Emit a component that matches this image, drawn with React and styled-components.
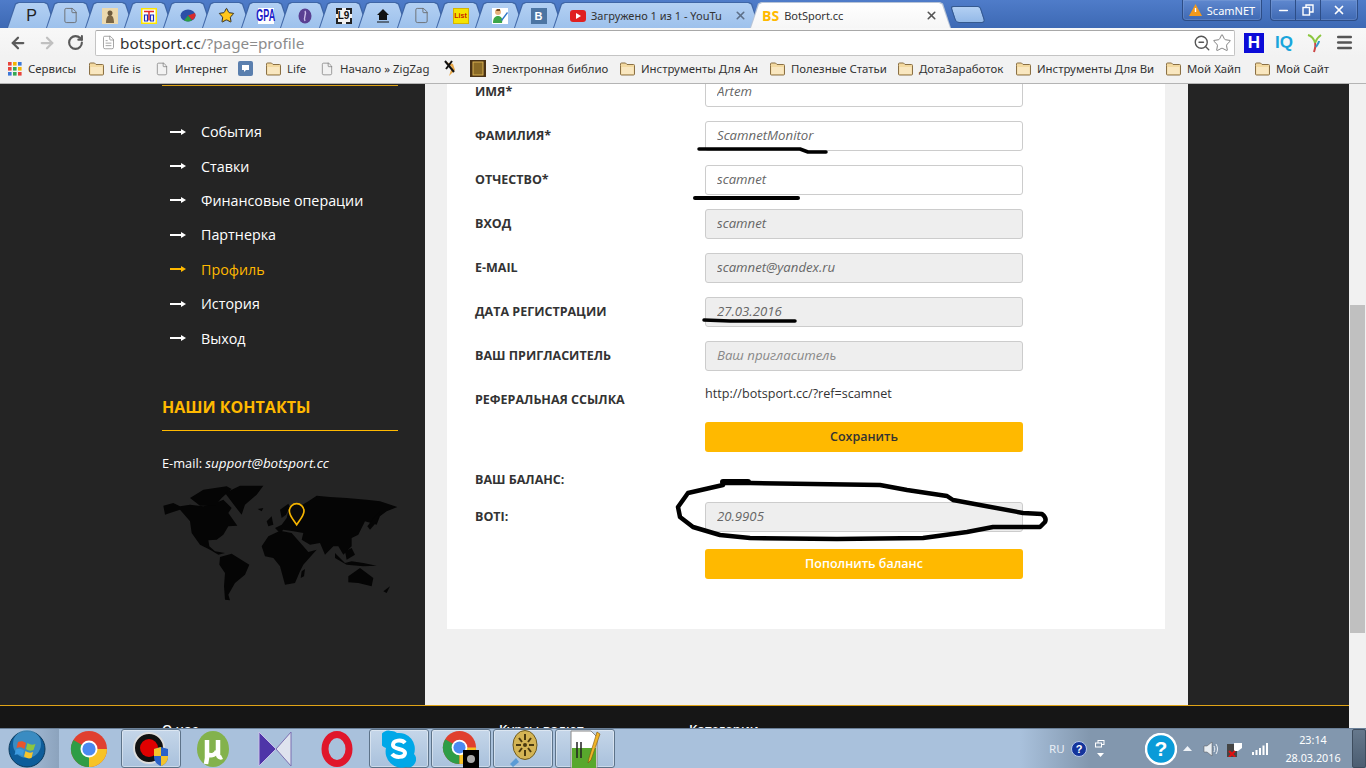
import React from 'react';
import styled, { createGlobalStyle, css } from 'styled-components';
import { ArrowLeft, ArrowRight, RotateCw, ZoomOut, Star, Menu, FileText, File, Minus, X } from 'lucide-react';

const Global = createGlobalStyle`
	html, body { margin: 0; padding: 0; background: #fff; }
	body { font-family: "Open Sans", sans-serif; overflow: hidden; }
	* { box-sizing: border-box; }
`;

const Screen = styled.div`
	position: relative;
	width: 1366px;
	height: 768px;
	overflow: hidden;
	display: flex;
	flex-direction: column;
`;

/* ---- browser chrome ---- */
const TabStrip = styled.div`
	height: 28px;
	flex: none;
	display: flex;
	align-items: flex-end;
	padding-left: 7px;
	background: linear-gradient(180deg, #4f7cc9, #3d69b4);
	position: relative;
`;
const tabShape = 'polygon(0 100%, 8px 6%, 11px 0, calc(100% - 11px) 0, calc(100% - 8px) 6%, 100% 100%)';
const Tab = styled.div`
	width: ${({ $w }) => $w}px;
	height: 26px;
	margin-right: -10px;
	flex: none;
	clip-path: ${tabShape};
	background: ${({ $active }) => ($active ? '#b8c4d6' : '#3f66a6')};
	padding: 1px 1px 0;
	position: relative;
	z-index: ${({ $active }) => ($active ? 2 : 1)};
`;
const TabFace = styled.div`
	height: 100%;
	clip-path: ${tabShape};
	background: ${({ $active }) => ($active ? 'linear-gradient(180deg,#fff,#f6f6f6)' : 'linear-gradient(180deg,#b3d0f3,#9dc1ec)')};
	display: flex;
	align-items: center;
	justify-content: ${({ $wide }) => ($wide ? 'flex-start' : 'center')};
	padding: ${({ $wide }) => ($wide ? '0 12px 0 16px' : '0')};
	gap: 5px;
	font-size: 11px;
	color: #333;
	white-space: nowrap;
	overflow: hidden;
`;
const TabTitle = styled.span`
	flex: 1;
	font-family: "Noto Sans", sans-serif;
`;
const BrandMark = styled.b`
	color: #ffb900;
	font-size: 14px;
	flex: none;
	margin-left: -5px;
`;
const SmallFav = styled.span`
	width: 16px;
	height: 16px;
	display: flex;
	align-items: center;
	justify-content: center;
	font-family: "Liberation Sans", sans-serif;
	background: ${({ $bg }) => $bg || 'transparent'};
	color: ${({ $fg }) => $fg || '#222'};
	font-size: ${({ $size }) => $size || 12}px;
	font-weight: ${({ $weight }) => $weight || 700};
	border: ${({ $edge }) => $edge || '0'};
	letter-spacing: ${({ $track }) => $track || 0}px;
`;
const NarrowLetters = styled.span`
	display: block;
	transform: scaleX(0.56);
`;
const NewTab = styled.div`
	width: 30px;
	height: 17px;
	margin: 0 0 5px 12px;
	background: linear-gradient(180deg, #b3d0f3, #94b9e8);
	border: 1px solid #35598f;
	border-radius: 3px 3px 4px 4px;
	transform: skewX(18deg);
`;
const CloseMark = styled(X)`
	flex: none;
	color: ${({ $active }) => ($active ? '#555' : '#5d6f88')};
`;
const WindowGroup = styled.div`
	position: absolute;
	top: 0;
	right: 0;
	display: flex;
	gap: 8px;
`;
const AlertButton = styled.div`
	width: 80px;
	height: 21px;
	display: flex;
	align-items: center;
	justify-content: center;
	gap: 5px;
	color: #fff;
	font-size: 11px;
	background: linear-gradient(180deg, #5f88cf, #3f69b3);
	border: 1px solid #2d4d86;
	border-top: 0;
	border-radius: 0 0 4px 4px;
	box-shadow: inset 0 0 0 1px #8aa8dc55;
	font-family: "Noto Sans", sans-serif;
`;
const WindowButtons = styled.div`
	width: 88px;
	height: 21px;
	display: flex;
	background: linear-gradient(180deg, #5f88cf, #3f69b3);
	border: 1px solid #2d4d86;
	border-top: 0;
	border-radius: 0 0 4px 4px;
	margin-right: 8px;
	box-shadow: inset 0 0 0 1px #8aa8dc55;
`;
const WinBtn = styled.div`
	flex: ${({ $grow }) => $grow || 1};
	display: flex;
	align-items: center;
	justify-content: center;
	color: #fff;
	border-left: ${({ $first }) => ($first ? '0' : '1px solid #2d4d86')};
`;

const Toolbar = styled.div`
	height: 29px;
	flex: none;
	display: flex;
	align-items: center;
	padding: 0 0 0 3px;
	background: linear-gradient(180deg, #f8f8f8, #f2f2f2);
`;
const NavIcon = styled.div`
	width: 29px;
	display: flex;
	justify-content: center;
	color: ${({ $off }) => ($off ? '#c0c0c0' : '#5a5a5a')};
`;
const Omnibox = styled.div`
	width: 1140px;
	height: 26px;
	margin-left: 5px;
	display: flex;
	align-items: center;
	background: #fff;
	border: 1px solid #c4c4c4;
	border-top-color: #a8a8a8;
	border-radius: 2px;
	padding: 0 2px 0 5px;
	font-family: "Noto Sans", sans-serif;
	font-size: 15.3px;
	color: #333;
`;
const UrlText = styled.span`
	margin-left: 4px;
	flex: 1;
	span { color: #8c8c8c; }
`;
const ExtIcons = styled.div`
	display: flex;
	align-items: center;
	margin-left: 9px;
	gap: 11px;
`;
const HBadge = styled.div`
	width: 20px;
	height: 20px;
	background: #0c0cd8;
	color: #fff;
	font: bold 17px "Liberation Sans", sans-serif;
	text-align: center;
	line-height: 20px;
`;
const IqBadge = styled.div`
	color: #1aa5dc;
	font: bold 17px "Liberation Sans", sans-serif;
	width: 20px;
`;

const Bookmarks = styled.div`
	height: 27px;
	flex: none;
	display: flex;
	align-items: center;
	padding: 0 0 3px 8px;
	background: #f2f2f2;
	border-bottom: 1px solid #b4b4b4;
	font-family: "Noto Sans", sans-serif;
	font-size: 11.4px;
	color: #333;
`;
const Mark = styled.div`
	display: flex;
	align-items: center;
	gap: 6px;
	width: ${({ $w }) => $w}px;
	flex: none;
	white-space: nowrap;
	span { flex: 1; }
	svg { flex: none; }
`;

/* ---- page ---- */
const Viewport = styled.div`
	position: relative;
	flex: 1;
	min-height: 0;
	display: flex;
`;
const Page = styled.div`
	flex: 1;
	min-width: 0;
	overflow: hidden;
	background: #242424;
`;
const Columns = styled.div`
	display: flex;
	height: 621px;
`;
const Sidebar = styled.aside`
	width: 425px;
	flex: none;
	padding: 1px 27px 0 162px;
	color: #fff;
`;
const TopRule = styled.div`
	height: 1px;
	background: #e0a417;
`;
const NavList = styled.ul`
	list-style: none;
	margin: 28.5px 0 0;
	padding: 0 0 0 8px;
`;
const NavItem = styled.li`
	height: 34.4px;
	display: flex;
	align-items: center;
	gap: 15px;
	font-size: 14.3px;
	color: ${({ $active }) => ($active ? '#ffb900' : '#fff')};
	svg { flex: none; }
`;
const ContactsTitle = styled.h3`
	margin: 41px 0 0;
	height: 35px;
	border-bottom: 1px solid #ffb900;
	color: #ffb900;
	font-size: 16px;
	font-weight: 700;
	line-height: 22px;
`;
const EmailLine = styled.div`
	margin-top: 22px;
	font-size: 12.8px;
	line-height: 20px;
	i { font-style: italic; font-size: 13.4px; }
`;
const MapBox = styled.svg`
	display: block;
	margin: 10px 0 0 -2px;
`;
const Main = styled.main`
	width: 763px;
	flex: none;
	background: #f0f0f0;
	padding: 0 23px 0 22px;
`;
const Card = styled.div`
	background: #fff;
	height: 552px;
	margin-top: -7px;
	padding-left: 28px;
`;
const Row = styled.div`
	display: grid;
	grid-template-columns: 230px 318px;
	align-items: center;
	height: 30px;
	margin-top: ${({ $top }) => $top ?? 14}px;
`;
const Label = styled.label`
	font-size: 12.5px;
	font-weight: 700;
	color: #333;
	text-transform: uppercase;
	white-space: nowrap;
	position: relative;
	top: -1px;
`;
const Input = styled.input`
	width: 318px;
	height: 30px;
	padding: 0 11px 2px;
	border: 1px solid #ccc;
	border-radius: 3px;
	background: ${({ disabled }) => (disabled ? '#eee' : '#fff')};
	color: #666;
	font: italic 13.2px "Open Sans", sans-serif;
	-webkit-text-fill-color: #666;
	opacity: 1;
	outline: none;
	&::placeholder { color: #888; -webkit-text-fill-color: #888; opacity: 1; }
`;
const RefLink = styled.div`
	font-size: 12.6px;
	color: #333;
	position: relative;
	top: -7px;
`;
const Action = styled.button`
	grid-column: 2;
	width: 318px;
	height: 30px;
	padding: 0 0 2px;
	border: 0;
	border-radius: 3px;
	background: #ffb900;
	font: 600 12.5px "Open Sans", sans-serif;
	color: ${({ $light }) => ($light ? '#fff' : '#333')};
`;
const RightGutter = styled.div`
	flex: 1;
`;
const Footer = styled.footer`
	height: 30px;
	background: #161616;
	border-top: 1px solid #e0a417;
	display: flex;
	padding: 14px 0 0 162px;
	color: #fff;
	font-size: 13px;
	font-weight: 600;
	line-height: 18px;
`;
const FooterCol = styled.div`
	width: ${({ $w }) => $w}px;
	flex: none;
`;
const Scrollbar = styled.div`
	width: 17px;
	flex: none;
	background: #f1f1f1;
	display: flex;
	flex-direction: column;
	align-items: center;
	padding-top: 221px;
	padding-bottom: 5px;
`;
const Thumb = styled.div`
	width: 15px;
	height: 328px;
	background: #c0c0c0;
`;
const DownArrow = styled.div`
	margin-top: auto;
	width: 0;
	height: 0;
	border: 4px solid transparent;
	border-top: 5px solid #505050;
	border-bottom: 0;
`;
const Ink = styled.svg`
	position: absolute;
	left: 0;
	top: -84px;
	pointer-events: none;
`;

/* ---- taskbar ---- */
const Taskbar = styled.div`
	position: absolute;
	left: 0;
	right: 0;
	bottom: 0;
	height: 40px;
	display: flex;
	align-items: center;
	background: linear-gradient(90deg, #a9c1dc 0, #a9c1dc 1020px, #8297ae 1090px, #8297ae 100%);
	border-top: 1px solid #6b8098;
`;
const StartSlot = styled.div`
	width: 59px;
	flex: none;
	padding-left: 8px;
	display: flex;
	align-items: center;
	height: 100%;
	background: linear-gradient(90deg, #a9c1dc 30%, #8ca3bd 100%);
`;
const TaskItems = styled.div`
	display: flex;
	gap: 2px;
	height: 100%;
`;
const TaskItem = styled.div`
	width: 60px;
	height: 39px;
	display: flex;
	align-items: center;
	justify-content: center;
	${({ $open }) => $open && css`
		border: 1px solid #5d7389;
		border-radius: 3px;
		background: linear-gradient(180deg, #c5d6e9, #a9c1dc);
		box-shadow: inset 0 0 0 1px #ffffff66;
	`}
`;
const Tray = styled.div`
	margin-left: auto;
	display: flex;
	align-items: center;
	height: 100%;
	color: #fff;
`;
const TrayLang = styled.span`
	width: 18px;
	font: 11.5px "Noto Sans", sans-serif;
	color: #e8eef5;
`;
const Clock = styled.div`
	width: 78px;
	text-align: center;
	font: 10.8px/18px "Noto Sans", sans-serif;
	color: #fff;
`;
const ShowDesktop = styled.div`
	width: 14px;
	height: 39px;
	background: linear-gradient(180deg, #66788c, #4c5e72);
	border: 1px solid #3e4d5e;
	border-radius: 2px;
`;
const TraySlot = styled.div`
	width: ${({ $w }) => $w}px;
	flex: none;
	display: flex;
	justify-content: center;
	align-items: center;
	padding-left: ${({ $pad }) => $pad || 0}px;
	flex-direction: ${({ $col }) => ($col ? 'column' : 'row')};
	gap: ${({ $col }) => ($col ? '5px' : '0')};
	svg { flex: none; }
`;

/* ---- small drawings ---- */
const Folder = () => (
	<svg width="15" height="14" viewBox="0 0 15 14">
		<path d="M.5 3.5v8.5a1 1 0 0 0 1 1h12a1 1 0 0 0 1-1V3.5a1 1 0 0 0-1-1H7L5.5 1H1.5a1 1 0 0 0-1 1z" fill="#f3d9a0" stroke="#8a7045" />
		<path d="M1.5 5h12v7h-12z" fill="#f9e7c0" />
	</svg>
);
const Doc = ({ size = 14, color = '#777' }) => <File size={size} color={color} strokeWidth={1.2} />;
const AppsGrid = () => (
	<svg width="14" height="14" viewBox="0 0 14 14">
		{['#e8453c', '#f4b400', '#3c78d8', '#e8453c', '#34a853', '#f4b400', '#3c78d8', '#34a853', '#e8453c'].map((c, i) => (
			<rect key={i} x={(i % 3) * 5} y={Math.floor(i / 3) * 5} width="3.6" height="3.6" fill={c} />
		))}
	</svg>
);
const NavArrow = ({ color }) => (
	<svg width="16" height="8" viewBox="0 0 16 8">
		<path d="M0 4h13" stroke={color} strokeWidth="2" />
		<path d="M11 1l5 3-5 3z" fill={color} />
	</svg>
);
const Chrome = ({ size = 38 }) => (
	<svg width={size} height={size} viewBox="0 0 38 38">
		<circle cx="19" cy="19" r="18" fill="#e0402f" />
		<path d="M19 19L3.4 10A18 18 0 0 0 19 37z" fill="#2e9d46" />
		<path d="M19 19h18A18 18 0 0 1 19 37z" fill="#f6c327" />
		<circle cx="19" cy="19" r="8.5" fill="#fff" />
		<circle cx="19" cy="19" r="6.6" fill="#4a8af0" />
	</svg>
);

const favicons = [
	<SmallFav key="p" $size={16} $weight={400}>P</SmallFav>,
	<Doc key="d1" size={17} color="#666" />,
	<svg key="a" width="16" height="16"><rect width="16" height="16" fill="#ecd9ae" /><circle cx="8" cy="5" r="2.500" fill="#6d5a3c" /><path d="M4 15c0-6 2-8 4-8s4 2 4 8z" fill="#7b6644" /></svg>,
	<svg key="b" width="16" height="16"><rect width="16" height="16" fill="#ffe400" /><rect x="1.500" y="1.500" width="13" height="13" fill="#fff" /><path d="M3 3.500h10M8 3.500v9" stroke="#e62a2a" strokeWidth="1.600" /><path d="M3.500 7h3v6h-3zM9.500 7h3v6h-3z" fill="none" stroke="#1d2fc0" strokeWidth="1.200" /></svg>,
	<svg key="c" width="16" height="13"><ellipse cx="8" cy="6.500" rx="7.500" ry="6" fill="#2c4ea8" /><path d="M8 6.500L15 4a7.500 6 0 0 1-3 7z" fill="#d92c2c" /><path d="M8 6.500l4 5a7.500 6 0 0 1-8 0z" fill="#2c9d46" /></svg>,
	<Star key="s" size={17} fill="#ffc61a" color="#222" strokeWidth={1.3} />,
	<SmallFav key="g" $bg="#fff" $fg="#1a1ac8" $size={16}><NarrowLetters>GPA</NarrowLetters></SmallFav>,
	<svg key="o" width="14" height="16"><ellipse cx="7" cy="8" rx="6.500" ry="7.500" fill="#5a3f92" /><path d="M7 3c2 3-2 6 0 10" stroke="#cdbde8" strokeWidth="1.400" fill="none" /></svg>,
	<SmallFav key="l" $bg="#f2f2f2" $fg="#111" $size={10} $edge="2px dashed #222">L9</SmallFav>,
	<svg key="h" width="14" height="15"><path d="M7 1l6 6h-2v5H3V7H1z" fill="#111" /><path d="M1 14h12" stroke="#111" /></svg>,
	<Doc key="d2" size={17} color="#666" />,
	<SmallFav key="li" $bg="#f5e400" $fg="#c81e00" $size={7} $edge="1px solid #d6b400">List</SmallFav>,
	<svg key="u" width="16" height="16"><rect width="16" height="16" fill="#fff" /><circle cx="6" cy="4" r="3" fill="#e6b27e" /><path d="M5 1h3v2H4z" fill="#7a4a1c" /><path d="M1 15c0-5 2-7 5-7s5 2 4 7z" fill="#3ca648" /><path d="M9 12L15 4l1 1-6 8z" fill="#2a72c8" /></svg>,
	<SmallFav key="v" $bg="#4c75a3" $fg="#fff" $size={11}>В</SmallFav>,
];

const navItems = ['События', 'Ставки', 'Финансовые операции', 'Партнерка', 'Профиль', 'История', 'Выход'];

const bookmarks = [
	[81, <AppsGrid />, 'Сервисы'],
	[66, <Folder />, 'Life is'],
	[83, <Doc />, 'Интернет'],
	[28, <svg width="15" height="15"><rect width="15" height="15" rx="2" fill="#5a7fae" /><path d="M4 4h7v5H8l-2 2V9H4z" fill="#fff" /></svg>, ''],
	[54, <Folder />, 'Life'],
	[123, <Doc />, 'Начало » ZigZag'],
	[27, <svg width="14" height="17"><path d="M2 2l7 5-3 9 6-6-2-6z" fill="#e8a848" /><path d="M2 1l9 11M3 9l6-8" stroke="#111" strokeWidth="2" /></svg>, ''],
	[150, <svg width="16" height="17"><rect width="16" height="17" fill="#4a3316" /><rect x="3" y="2" width="10" height="13" fill="#8a6a26" stroke="#d8b050" /></svg>, 'Электронная библио'],
	[150, <Folder />, 'Инструменты Для Ан'],
	[128, <Folder />, 'Полезные Статьи'],
	[118, <Folder />, 'ДотаЗаработок'],
	[150, <Folder />, 'Инструменты Для Ви'],
	[89, <Folder />, 'Мой Хайп'],
	[80, <Folder />, 'Мой Сайт'],
];

const fields = [
	['Имя*', 'Artem', false],
	['Фамилия*', 'ScamnetMonitor', false],
	['Отчество*', 'scamnet', false],
	['Вход', 'scamnet', true],
	['E-mail', 'scamnet@yandex.ru', true],
	['Дата регистрации', '27.03.2016', true],
];

const WorldMap = () => (
	<MapBox width="240" height="122" viewBox="0 0 720 366">
		<g fill="#050505">
			<path d="M10 68L40 60L60 70L90 65L130 70L160 62L190 50L215 75L205 90L232 128L205 130L190 155L170 170L145 172L148 190L165 205L195 210L175 215L150 200L120 185L95 150L90 115L60 80L30 90L15 95Z" />
			<path d="M90 45L130 20L200 10L215 18L185 45L165 68L120 68Z" />
			<path d="M195 30L240 8L310 8L290 35L255 65L245 95L225 70Z" />
			<path d="M180 222L215 212L268 245L255 275L225 300L205 335L210 352L195 350L192 310L195 270L178 245Z" />
			<path d="M305 190L325 160L360 143L395 150L430 190L445 207L470 200L430 245L420 265L405 300L375 305L360 250L340 225L315 220Z" />
			<path d="M420 70L445 55L470 38L510 42L560 45L620 50L660 55L712 72L680 85L660 100L650 125L615 115L595 155L575 165L575 190L550 215L535 190L520 190L495 215L480 180L450 185L425 170L430 150L400 145L370 140L360 150L345 135L365 125L380 105L385 85Z" />
			<path d="M360 80L385 62L390 72L378 95L365 105Z" />
			<path d="M320 115L335 100L340 125L325 130Z" />
			<path d="M293 78L310 75L305 85Z" />
			<path d="M565 280L600 255L640 285L635 310L595 300L565 298Z" />
			<path d="M525 210L555 240L575 235L610 240L650 248L610 250L560 245L525 225Z" />
			<path d="M555 205L575 195L585 215L560 230Z" />
			<path d="M645 100L660 85L652 115L630 140L622 130Z" />
			<path d="M425 265L435 258L432 280L422 285Z" />
			<path d="M670 325L690 310L680 330Z" />
		</g>
		<path d="M410 125C400 110 388 98 388 84a22 22 0 0 1 44 0C432 98 420 110 410 125z" fill="#0a0a0a" stroke="#f5b400" strokeWidth="5" />
	</MapBox>
);

const App = () => (
	<Screen>
		<Global />
		<TabStrip>
			{favicons.map((icon, i) => (
				<Tab key={i} $w={49}>
					<TabFace>{icon}</TabFace>
				</Tab>
			))}
			<Tab $w={207}>
				<TabFace $wide>
					<svg width="16" height="12" style={{ flex: 'none' }}><rect width="16" height="12" rx="3" fill="#e02020" /><path d="M6 3l5 3-5 3z" fill="#fff" /></svg>
					<TabTitle>Загружено 1 из 1 - YouTu</TabTitle>
					<CloseMark size={13} strokeWidth={3} />
				</TabFace>
			</Tab>
			<Tab $w={201} $active>
				<TabFace $active $wide>
					<BrandMark>BS</BrandMark>
					<TabTitle>BotSport.cc</TabTitle>
					<CloseMark $active size={13} strokeWidth={3} />
				</TabFace>
			</Tab>
			<NewTab />
			<WindowGroup>
				<AlertButton>
					<svg width="13" height="12"><path d="M6.5 0L13 12H0z" fill="#f39a1c" /><path d="M6.5 4v4" stroke="#fff" strokeWidth="1.4" /></svg>
					ScamNET
				</AlertButton>
				<WindowButtons>
					<WinBtn $first><Minus size={13} strokeWidth={3} /></WinBtn>
					<WinBtn>
						<svg width="12" height="12" fill="none" stroke="#fff" strokeWidth="1.4"><rect x="1" y="3.5" width="6.5" height="7.5" /><path d="M4 3V1h7v7H8" /></svg>
					</WinBtn>
					<WinBtn $grow={1.5}><X size={14} strokeWidth={3} /></WinBtn>
				</WindowButtons>
			</WindowGroup>
		</TabStrip>
		<Toolbar>
			<NavIcon><ArrowLeft size={18} strokeWidth={3} /></NavIcon>
			<NavIcon $off><ArrowRight size={18} strokeWidth={3} /></NavIcon>
			<NavIcon><RotateCw size={17} strokeWidth={3} /></NavIcon>
			<Omnibox>
				<FileText size={15} color="#888" strokeWidth={1.2} />
				<UrlText>botsport.cc<span>/?page=profile</span></UrlText>
				<ZoomOut size={18} color="#555" strokeWidth={1.8} />
				<Star size={20} color="#777" strokeWidth={1.1} style={{ marginLeft: 1 }} />
			</Omnibox>
			<ExtIcons>
				<HBadge>H</HBadge>
				<IqBadge>IQ</IqBadge>
				<svg width="18" height="20"><path d="M2 2c4 1 6 4 7 8M15 2c-3 2-5 5-6 8" stroke="#8cc63f" strokeWidth="2" fill="none" /><path d="M9 10c1 3 0 6-1 9" stroke="#c44" strokeWidth="2" fill="none" /><path d="M13 8c0 2-2 4-3 6" stroke="#39c" strokeWidth="2" fill="none" /></svg>
				<Menu size={19} strokeWidth={3} color="#555" />
			</ExtIcons>
		</Toolbar>
		<Bookmarks>
			{bookmarks.map(([w, icon, text], i) => (
				<Mark key={i} $w={w}>
					{icon}
					{text && <span>{text}</span>}
				</Mark>
			))}
		</Bookmarks>
		<Viewport>
			<Page>
				<Columns>
					<Sidebar>
						<TopRule />
						<NavList>
							{navItems.map(item => (
								<NavItem key={item} $active={item === 'Профиль'}>
									<NavArrow color={item === 'Профиль' ? '#ffb900' : '#fff'} />
									{item}
								</NavItem>
							))}
						</NavList>
						<ContactsTitle>НАШИ КОНТАКТЫ</ContactsTitle>
						<EmailLine>E-mail: <i>support@botsport.cc</i></EmailLine>
						<WorldMap />
					</Sidebar>
					<Main>
						<Card>
							{fields.map(([label, value, disabled], i) => (
								<Row key={label} $top={i === 0 ? 0 : 14}>
									<Label>{label}</Label>
									<Input readOnly value={value} disabled={disabled} />
								</Row>
							))}
							<Row>
								<Label>Ваш пригласитель</Label>
								<Input disabled placeholder="Ваш пригласитель" />
							</Row>
							<Row>
								<Label>Реферальная ссылка</Label>
								<RefLink>http://botsport.cc/?ref=scamnet</RefLink>
							</Row>
							<Row $top={7}>
								<Action>Сохранить</Action>
							</Row>
							<Row $top={13}>
								<Label>Ваш баланс:</Label>
							</Row>
							<Row $top={7}>
								<Label>BOTI:</Label>
								<Input disabled value="20.9905" readOnly />
							</Row>
							<Row $top={17}>
								<Action $light>Пополнить баланс</Action>
							</Row>
						</Card>
					</Main>
					<RightGutter />
				</Columns>
				<Footer>
					<FooterCol $w={337}>О нас</FooterCol>
					<FooterCol $w={190}>Курсы валют</FooterCol>
					<FooterCol $w={100}>Категории</FooterCol>
				</Footer>
			</Page>
			<Scrollbar>
				<Thumb />
				<DownArrow />
			</Scrollbar>
			<Ink width="1366" height="768" fill="none" stroke="#000" strokeLinecap="round" strokeLinejoin="round">
				<path d="M699 149H800L808 152H826" strokeWidth="3.5" />
				<path d="M695 198H798" strokeWidth="4" />
				<path d="M704 320L730 321H795" strokeWidth="3.5" />
				<path d="M723 483H750L880 485L907 490L947 496L953 500L1023 513L1042 514Q1047 518 1045 522L1040 527L993 527L967 532L923 538L837 539L750 538L720 535L693 527L680 517L678 507L688 493L723 485" strokeWidth="4.5" />
				<path d="M723 482H748" strokeWidth="6" />
			</Ink>
		</Viewport>
		<Taskbar>
			<StartSlot>
				<svg width="38" height="38" viewBox="0 0 38 38">
					<circle cx="19" cy="19" r="18" fill="#0e5d9a" stroke="#0c3a5c" />
					<circle cx="19" cy="14" r="14" fill="#5fb2e4" opacity=".55" />
					<path d="M10 12c3-1 5-1 8 1l-1.500 6c-3-2-5-2-8-1z" fill="#e8552c" />
					<path d="M19.500 13c3 2 5 2 8 1l-2 6c-3 1-5 1-7.500-1z" fill="#8cc63f" />
					<path d="M8 19.500c3-1 5-1 8 1L14.500 26c-3-2-5-2-8-1z" fill="#3d9be0" />
					<path d="M17.500 21c3 2 5 2 7.500 1l-1.500 6c-3 1-5 0-7.500-1.500z" fill="#f7c52c" />
				</svg>
			</StartSlot>
			<TaskItems>
				<TaskItem><Chrome /></TaskItem>
				<TaskItem $open>
					<svg width="38" height="38" viewBox="0 0 38 38">
						<circle cx="17" cy="18" r="15" fill="#111" stroke="#ddd" strokeWidth="2" />
						<circle cx="17" cy="18" r="9" fill="#e00000" />
						<path d="M22 19l7-2 7 2v8c0 5-4 8-7 9-3-1-7-4-7-9z" fill="#2a62c8" />
						<path d="M29 17v19c3-1 7-4 7-9v-1H22v-7z" fill="#f3c32c" />
					</svg>
				</TaskItem>
				<TaskItem>
					<svg width="34" height="38" viewBox="0 0 34 38">
						<ellipse cx="17" cy="19" rx="16" ry="18" fill="#83b24c" />
						<path d="M11 10v18l-1 6M11 24c5 3 9 0 10-3M22 10v14c0 3 2 4 4 3" stroke="#fff" strokeWidth="4.500" fill="none" />
					</svg>
				</TaskItem>
				<TaskItem>
					<svg width="34" height="36" viewBox="0 0 34 36">
						<path d="M1 1L18 18 1 35z" fill="#4e35a8" stroke="#c8c0e8" />
						<path d="M33 1L18 18l15 17z" fill="#dfe3ee" stroke="#7b6fb0" />
					</svg>
				</TaskItem>
				<TaskItem>
					<svg width="32" height="38" viewBox="0 0 32 38">
						<ellipse cx="16" cy="19" rx="12" ry="14.500" fill="none" stroke="#e0162b" strokeWidth="7" />
					</svg>
				</TaskItem>
				<TaskItem $open>
					<svg width="34" height="38" viewBox="0 0 34 38">
						<path d="M9 1a8 8 0 0 1 6 2a16 16 0 0 1 17 21a8 8 0 0 1-8 13a16 16 0 0 1-20-19a8 8 0 0 1 5-17z" fill="#00a8e8" />
						<path d="M23 13c-3-4-12-3-12 2 0 5 12 3 12 8 0 5-10 5-13 1" stroke="#fff" strokeWidth="4" fill="none" />
					</svg>
				</TaskItem>
				<TaskItem $open>
					<svg width="38" height="38" viewBox="0 0 38 38">
						<g transform="scale(.92)"><Chrome /></g>
						<rect x="21" y="20" width="16" height="18" fill="#000" />
						<circle cx="29" cy="29" r="4" fill="#aaa" />
					</svg>
				</TaskItem>
				<TaskItem $open>
					<svg width="30" height="38" viewBox="0 0 30 38">
						<ellipse cx="17" cy="15" rx="12" ry="14.500" fill="#d4b454" stroke="#6e5a1e" />
						<circle cx="17" cy="15" r="2" fill="#4a3a10" />
						<path d="M17 4v6M17 20v6M8 15h5M21 15h5M11 8l3 4M23 22l-3-4M23 8l-3 4M11 22l3-4" stroke="#4a3a10" strokeWidth="2" />
						<path d="M8 28l-6 6 3 3 6-5z" fill="#5b9bd5" />
					</svg>
				</TaskItem>
				<TaskItem $open>
					<svg width="32" height="38" viewBox="0 0 32 38">
						<path d="M2 1h20l6 6v31H2z" fill="#fff" stroke="#888" />
						<path d="M3 18h24v20H3z" fill="#58a82c" />
						<path d="M8 12v16M12 12v16" stroke="#222" strokeWidth="1.500" />
						<path d="M28 2L20 28l-1 5 3-3L31 4z" fill="#f0b428" stroke="#7a5410" strokeWidth=".6" />
					</svg>
				</TaskItem>
			</TaskItems>
			<Tray>
				<TrayLang>RU</TrayLang>
				<TraySlot $w={24}>
					<svg width="16" height="16"><circle cx="8" cy="8" r="7.500" fill="#14349c" stroke="#b8c8e8" /><text x="8" y="12" fontSize="11" fontWeight="700" fill="#fff" textAnchor="middle" fontFamily="Liberation Sans">?</text></svg>
				</TraySlot>
				<TraySlot $w={18} $col>
					<svg width="10" height="8" fill="none" stroke="#fff"><rect x="3" y=".5" width="6" height="4" /><rect x=".5" y="3" width="6" height="4" fill="#8297ae" /></svg>
					<svg width="7" height="4"><path d="M0 0h7L3.500 4z" fill="#fff" /></svg>
				</TraySlot>
				<TraySlot $w={32} />
				<TraySlot $w={40}>
					<svg width="32" height="32"><circle cx="16" cy="16" r="15" fill="#0a9bd8" stroke="#fff" strokeWidth="2.500" /><text x="16" y="23" fontSize="21" fontWeight="700" fill="#fff" textAnchor="middle" fontFamily="Liberation Sans">?</text></svg>
				</TraySlot>
				<TraySlot $w={12}>
					<svg width="9" height="5"><path d="M0 5L4.500 0 9 5z" fill="#eef2f7" /></svg>
				</TraySlot>
				<TraySlot $w={35}>
					<svg width="16" height="16"><path d="M1 5h3l5-4v14l-5-4H1z" fill="#e8edf2" stroke="#555" strokeWidth=".5" /><path d="M11 5c1 2 1 4 0 6M13 3c2 3 2 7 0 10" stroke="#eef2f7" fill="none" /></svg>
				</TraySlot>
				<TraySlot $w={13}>
					<svg width="16" height="16"><rect x="0" y="3" width="10" height="13" fill="#444" /><path d="M7 2h8v5l-4 3H7z" fill="#fff" /><path d="M2 10l6 6M8 10l-6 6" stroke="#e01010" strokeWidth="2" /></svg>
				</TraySlot>
				<TraySlot $w={33} $pad={5}>
					<svg width="16" height="12"><path d="M0 9h2v3H0zM3.500 7h2v5h-2zM7 5h2v7H7zM10.500 2.500h2V12h-2zM14 0h2v12h-2z" fill="#fff" /></svg>
				</TraySlot>
				<Clock>23:14<br />28.03.2016</Clock>
				<ShowDesktop />
			</Tray>
		</Taskbar>
	</Screen>
);

export default App;
